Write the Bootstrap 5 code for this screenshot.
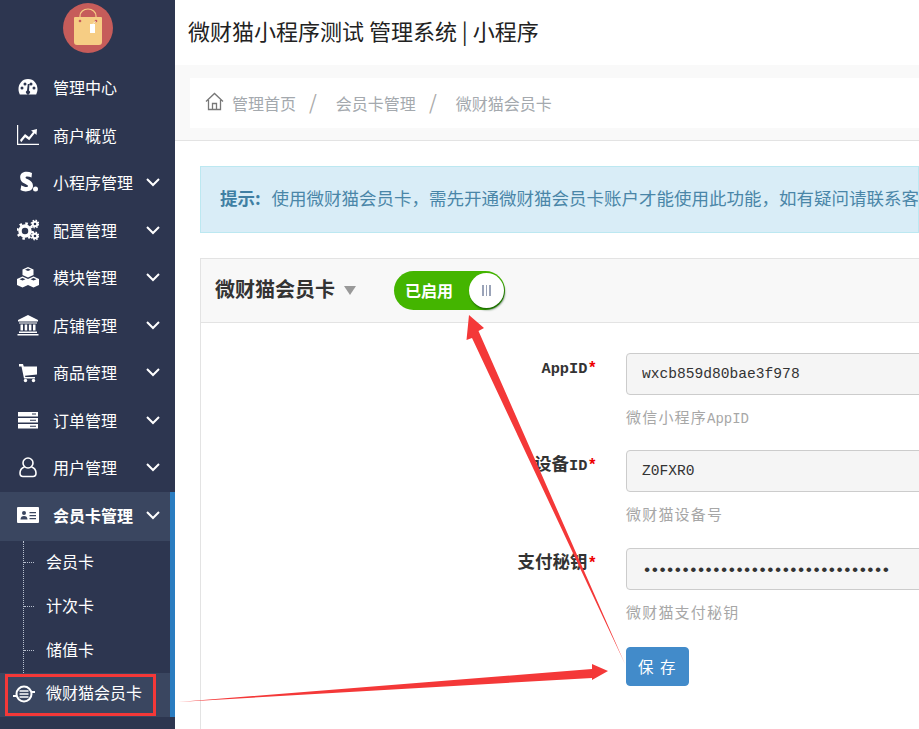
<!DOCTYPE html>
<html lang="zh">
<head>
<meta charset="utf-8">
<title>微财猫会员卡</title>
<link rel="stylesheet" href="https://cdn.jsdelivr.net/npm/bootstrap@5.3.0/dist/css/bootstrap.min.css">
<style>
html,body{height:729px;overflow:hidden;}
body{font-family:"Noto Sans CJK SC","Liberation Sans",sans-serif;background:#fff;position:relative;width:919px;}
.shell{height:729px;width:919px;overflow:hidden;}
.side{width:175px;background:#2d3650;flex:none;height:729px;color:#fff;}
.logo-box{height:64.5px;padding-top:3px;}
.menu-row{height:47.5px;padding-left:17px;padding-right:14px;padding-bottom:2px;font-size:16px;color:#fff;line-height:1;}
.menu-row .ico{width:22px;height:22px;flex:none;margin-right:14px;fill:#fff;}
.menu-row .lbl{flex:1;white-space:nowrap;}
.menu-row .chev{width:14px;height:10px;flex:none;margin-top:0;fill:none;stroke:#fff;stroke-width:2;margin-right:1px;}
.open-wrap{border-right:5px solid #2a7cc0;margin-top:-.5px;}
.menu-open{background:#3a4660;height:49px;padding-right:9px;}
.menu-open .lbl{font-weight:700;}
.sub-list{position:relative;}
.sub-list::before{content:"";position:absolute;left:23px;top:0;bottom:0;border-left:1px dotted #b8c0cf;}
.sub-row{height:44px;padding-left:46px;padding-bottom:4px;font-size:16px;position:relative;color:#fff;line-height:1;}
.sub-row.tick::before{content:"";position:absolute;left:24px;width:10px;top:21px;border-top:1px dotted #b8c0cf;}
.sub-row.now{background:#3a4660;padding-bottom:6px;}
.sub-ico{position:absolute;left:13px;top:10px;width:22px;height:22px;}
.main-area{flex:none;width:744px;min-width:0;overflow:hidden;}
.top-title{height:65px;padding-left:13px;padding-bottom:4px;font-size:22px;color:#222;white-space:nowrap;}
.crumb-band{height:76px;background:#f9f9f9;border-bottom:1px solid #e3e3e3;padding:13px 0 0 15px;}
.crumb-box{height:50px;background:#fff;padding-left:15px;font-size:16px;}
.crumb-box .breadcrumb{--bs-breadcrumb-divider-color:#aaa;--bs-breadcrumb-item-padding-x:12px;--bs-breadcrumb-item-active-color:#a4a9ae;margin:0;}
.crumb-box .breadcrumb-item{color:#a4a9ae;padding-left:0;}
.crumb-box .breadcrumb-item+.breadcrumb-item{padding-left:13px;}
.crumb-box .breadcrumb-item+.breadcrumb-item::before{padding-right:19px;font-size:20px;line-height:22px;color:#aaa;}
.home-ico{width:19px;height:19px;margin-right:8px;margin-top:-3px;stroke:#777;fill:none;stroke-width:1.3;}
.page-body{padding:25px 0 0 25px;}
.tip-box{height:67px;background:#d9edf7;border:1px solid #bce8f1;color:#4a86a8;font-size:17.5px;border-radius:0;padding:0 0 3px 19px;margin:0 0 25px;white-space:nowrap;overflow:hidden;}
.tip-box b{color:#3f7fa3;margin-right:7px;}
.panel-box{border:1px solid #e3e3e3;border-radius:0;height:520px;width:800px;}
.panel-head{height:64px;background:#f8f8f8;border-bottom:1px solid #e3e3e3;border-radius:0!important;padding:0 0 3px 14px;}
.panel-name{font-size:20px;font-weight:700;color:#333;width:121px;white-space:nowrap;}
.tri{width:0;height:0;border-left:6.5px solid transparent;border-right:6.5px solid transparent;border-top:9px solid #999;margin:3px 0 0 8px;}
.toggle-pill{width:111px;height:39px;border-radius:20px;background:#44b500;margin-left:38px;margin-top:2px;padding:0 1px 0 11px;color:#fff;font-size:16px;font-weight:700;}
.toggle-knob{width:35px;height:35px;border-radius:50%;background:#fff;box-shadow:1px 2px 2px rgba(0,60,0,.6);gap:2px;}
.toggle-knob i{display:block;width:1.5px;height:11px;background:#9aa3b8;}
.form-rows{padding-top:30px;}
.field-row{margin:0;}
.field-label{width:396px;flex:none;padding:0;text-align:right;font-family:"Noto Sans CJK SC",sans-serif;font-weight:700;font-size:17.5px;color:#333;line-height:26px;}
.field-label span{font-family:"Liberation Mono",monospace;font-size:15.3px;}
.field-label em{color:#e00;font-style:normal;font-size:16px;font-family:"Liberation Mono",monospace;}
.field-main{width:375px;flex:none;margin-left:29px;}
.field-main .form-control{height:42px;background:#f5f5f5;border:1.5px solid #ccc;border-radius:4px;padding:0 15px;font-family:"Liberation Mono","Noto Sans CJK SC",monospace;font-size:14.6px;color:#333;box-shadow:none;}
.field-main .form-control.secret{font-size:17px;letter-spacing:-2.5px;padding-top:2px;}
.help-line{font-size:15px;color:#a7a7a7;margin:12px 0 0;height:43px;line-height:20px;letter-spacing:1.2px;}
.help-line span{font-family:"Liberation Mono",monospace;font-size:14px;letter-spacing:0;}
.help-tall{height:44px;}
.save-btn{width:63px;height:39px;background:#428bca;border:1px solid #428bca;border-radius:4px;color:#fff;font-size:15.5px;padding:0;margin-top:2px;letter-spacing:1.5px;}
.overlay{position:absolute;left:0;top:0;width:919px;height:729px;pointer-events:none;}
</style>
</head>
<body>
<div class="shell d-flex">
  <nav class="side d-flex flex-column">
    <div class="logo-box d-flex justify-content-center">
      <svg width="50" height="50" viewBox="0 0 50 50">
        <circle cx="25" cy="25" r="25" fill="#c65c5a"/>
        <path d="M12 14h26a1 1 0 0 1 1 1v24a3 3 0 0 1-3 3H14a3 3 0 0 1-3-3V15a1 1 0 0 1 1-1z" fill="#f6cd84"/>
        <path d="M17 17v-4a8 7 0 0 1 16 0v4" fill="none" stroke="#f6cd84" stroke-width="1.2"/>
        <circle cx="17" cy="18" r="1.300" fill="#c65c5a"/><circle cx="33" cy="18" r="1.300" fill="#c65c5a"/>
        <path d="M33 18l-3.500 3" stroke="#fff" stroke-width=".6"/>
        <path d="M27 21h5v9h-5z" fill="#fff"/>
      </svg>
    </div>
    <a class="menu-row d-flex align-items-center text-decoration-none">
      <svg class="ico" viewBox="0 0 22 22"><path fill-rule="evenodd" d="M11 3C5 3 1.500 8 1.500 13c0 2 .5 3.500 1.300 5.500h16.400c.8-2 1.300-3.500 1.300-5.500C20.500 8 17 3 11 3zM5 10.500a1.500 1.500 0 1 1 0 3 1.500 1.500 0 0 1 0-3zm3-4a1.500 1.500 0 1 1 0 3 1.500 1.500 0 0 1 0-3zm6 0a1.500 1.500 0 1 1 0 3 1.500 1.500 0 0 1 0-3zm3 4a1.500 1.500 0 1 1 0 3 1.500 1.500 0 0 1 0-3zM12.500 8l-.5 6.500a2 2 0 1 1-2 0L10.800 8z"/></svg>
      <span class="lbl">管理中心</span>
    </a>
    <a class="menu-row d-flex align-items-center text-decoration-none">
      <svg class="ico" viewBox="0 0 22 22"><path d="M0 1h1.200v18.800H22V21H0z"/><path d="M3 16l5-6 4 3 4-5-2-1.500 6-1.500-.5 6-1.800-1.800-5.500 7-4-3-4 5z"/></svg>
      <span class="lbl">商户概览</span>
    </a>
    <a class="menu-row d-flex align-items-center text-decoration-none">
      <svg class="ico" viewBox="0 0 22 22"><path d="M15 2l-.5 4.500C11.500 5 8.500 5 8.500 6.500c0 2 7.500 2 7.500 8.500 0 6-9 6.500-12.500 4l.8-4.800c3 2 6.700 2.300 6.700.8 0-2-7.800-2.300-7.800-8.500C2.700.500 10-.5 15 2z"/><circle cx="18.500" cy="18" r="2.500"/></svg>
      <span class="lbl">小程序管理</span>
      <svg class="chev" viewBox="0 0 14 10"><path d="M1 2l6 6 6-6"/></svg>
    </a>
    <a class="menu-row d-flex align-items-center text-decoration-none">
      <svg class="ico" viewBox="0 0 22 22"><circle cx="8" cy="12" r="5" fill="none" stroke="#fff" stroke-width="3.500"/><circle cx="8" cy="12" r="7.500" fill="none" stroke="#fff" stroke-width="2.500" stroke-dasharray="2.500 3.400"/><circle cx="18" cy="5" r="2.300" fill="none" stroke="#fff" stroke-width="2"/><circle cx="18" cy="5" r="3.800" fill="none" stroke="#fff" stroke-width="1.300" stroke-dasharray="1.500 1.500"/><circle cx="18" cy="17" r="2.300" fill="none" stroke="#fff" stroke-width="2"/><circle cx="18" cy="17" r="3.800" fill="none" stroke="#fff" stroke-width="1.300" stroke-dasharray="1.500 1.500"/></svg>
      <span class="lbl">配置管理</span>
      <svg class="chev" viewBox="0 0 14 10"><path d="M1 2l6 6 6-6"/></svg>
    </a>
    <a class="menu-row d-flex align-items-center text-decoration-none">
      <svg class="ico" viewBox="0 0 22 22"><path d="M11 1l5.500 2.500v5.500L11 11.500 5.500 9V3.500z"/><path d="M5.500 10.500L11 13v6l-5.500 2.500L0 19v-6z"/><path d="M16.500 10.500L22 13v6l-5.500 2.500L11 19v-6z"/><path d="M11 5l-3-1.300L11 2.400l3 1.300zM5.500 14.500l-3-1.300 3-1.300 3 1.300zM16.500 14.500l-3-1.300 3-1.300 3 1.300z" fill="#2d3650"/></svg>
      <span class="lbl">模块管理</span>
      <svg class="chev" viewBox="0 0 14 10"><path d="M1 2l6 6 6-6"/></svg>
    </a>
    <a class="menu-row d-flex align-items-center text-decoration-none">
      <svg class="ico" viewBox="0 0 22 22"><path d="M11 1l10 5v1.500H1V6z"/><path d="M2 8.500h18v1H2zM3.500 10.500h2.500v6H3.500zM7.700 10.500h2.500v6H7.700zM11.900 10.500h2.500v6h-2.500zM16 10.500h2.500v6H16zM2 17.500h18v1.500H2zM.5 20h21v1.500H.5z"/></svg>
      <span class="lbl">店铺管理</span>
      <svg class="chev" viewBox="0 0 14 10"><path d="M1 2l6 6 6-6"/></svg>
    </a>
    <a class="menu-row d-flex align-items-center text-decoration-none">
      <svg class="ico" viewBox="0 0 22 22"><path d="M2 3h4l.8 2.500H20v8l-12 1.300.3 1.200H18v1.500H7l-2.500-12H2z"/><circle cx="8.500" cy="19.500" r="1.700"/><circle cx="16.500" cy="19.500" r="1.700"/></svg>
      <span class="lbl">商品管理</span>
      <svg class="chev" viewBox="0 0 14 10"><path d="M1 2l6 6 6-6"/></svg>
    </a>
    <a class="menu-row d-flex align-items-center text-decoration-none">
      <svg class="ico" viewBox="0 0 22 22"><path fill-rule="evenodd" d="M1 3h20v4.500H1zM15 4.500v1h4v-1zM1 9h20v4.500H1zM13 10.700v1h6v-1zM1 15h20v4.500H1zM13 16.700v1h6v-1z"/></svg>
      <span class="lbl">订单管理</span>
      <svg class="chev" viewBox="0 0 14 10"><path d="M1 2l6 6 6-6"/></svg>
    </a>
    <a class="menu-row d-flex align-items-center text-decoration-none">
      <svg class="ico" viewBox="0 0 22 22"><circle cx="11" cy="7" r="5" fill="none" stroke="#fff" stroke-width="1.600"/><path d="M7.500 11c-2.800 1-4.500 3-4.500 6 0 2.500 1 3.500 3 3.500h10c2 0 3-1 3-3.500 0-3-1.700-5-4.500-6" fill="none" stroke="#fff" stroke-width="1.600"/></svg>
      <span class="lbl">用户管理</span>
      <svg class="chev" viewBox="0 0 14 10"><path d="M1 2l6 6 6-6"/></svg>
    </a>
    <div class="open-wrap">
      <a class="menu-row menu-open d-flex align-items-center text-decoration-none">
        <svg class="ico" viewBox="0 0 22 22"><path fill-rule="evenodd" d="M1 3h20a1 1 0 0 1 1 1v14a1 1 0 0 1-1 1H1a1 1 0 0 1-1-1V4a1 1 0 0 1 1-1zM7 7a2 2 0 1 0 0 4 2 2 0 0 0 0-4zM3.500 15.500h7c0-2.500-1.500-3.500-3.500-3.500s-3.500 1-3.500 3.500zM12.500 8v1.300H19V8zM12.500 11v1.300H19V11zM12.500 14v1.300H19V14z"/></svg>
        <span class="lbl">会员卡管理</span>
        <svg class="chev" viewBox="0 0 14 10"><path d="M1 2l6 6 6-6"/></svg>
      </a>
      <div class="sub-list">
        <div class="sub-row tick d-flex align-items-center">会员卡</div>
        <div class="sub-row tick d-flex align-items-center">计次卡</div>
        <div class="sub-row tick d-flex align-items-center">储值卡</div>
        <div class="sub-row now d-flex align-items-center">
          <svg class="sub-ico" viewBox="0 0 22 22"><circle cx="11" cy="11" r="7.500" fill="none" stroke="#fff" stroke-width="2"/><path d="M0 13h4M18 9h4" stroke="#fff" stroke-width="1.800"/><path d="M6.500 8h9M6.500 11h9M6.500 14h9" stroke="#fff" stroke-width="1.400"/></svg>
          微财猫会员卡
        </div>
      </div>
    </div>
  </nav>
  <div class="main-area">
    <header class="top-title d-flex align-items-center">微财猫小程序测试 管理系统 | 小程序</header>
    <div class="crumb-band">
      <div class="crumb-box d-flex align-items-center">
        <svg class="home-ico" viewBox="0 0 19 19"><path d="M1 9.500L9.500 1.500 18 9.500M3.500 8v9.500h12V8M7.500 17.500v-6h4v6"/></svg>
        <ol class="breadcrumb">
          <li class="breadcrumb-item">管理首页</li>
          <li class="breadcrumb-item">会员卡管理</li>
          <li class="breadcrumb-item active">微财猫会员卡</li>
        </ol>
      </div>
    </div>
    <div class="page-body">
      <div class="alert tip-box d-flex align-items-center"><b>提示:</b>&nbsp;使用微财猫会员卡，需先开通微财猫会员卡账户才能使用此功能，如有疑问请联系客</div>
      <div class="card panel-box">
        <div class="card-header panel-head d-flex align-items-center">
          <span class="panel-name">微财猫会员卡</span>
          <span class="tri"></span>
          <div class="toggle-pill d-flex align-items-center justify-content-between">
            <span>已启用</span>
            <span class="toggle-knob d-flex align-items-center justify-content-center"><i></i><i></i><i></i></span>
          </div>
        </div>
        <form class="form-rows">
          <div class="field-row d-flex">
            <label class="field-label"><span>AppID</span><em>*</em></label>
            <div class="field-main">
              <input class="form-control" type="text" value="wxcb859d80bae3f978">
              <p class="help-line">微信小程序<span>AppID</span></p>
            </div>
          </div>
          <div class="field-row d-flex">
            <label class="field-label">设备<span>ID</span><em>*</em></label>
            <div class="field-main">
              <input class="form-control" type="text" value="Z0FXR0">
              <p class="help-line help-tall">微财猫设备号</p>
            </div>
          </div>
          <div class="field-row d-flex">
            <label class="field-label">支付秘钥<em>*</em></label>
            <div class="field-main">
              <input class="form-control secret" type="password" value="12345678901234567890123456789012">
              <p class="help-line">微财猫支付秘钥</p>
            </div>
          </div>
          <div class="field-row d-flex">
            <span class="field-label"></span>
            <div class="field-main"><button type="button" class="btn save-btn">保 存</button></div>
          </div>
        </form>
      </div>
    </div>
  </div>
</div>
<svg class="overlay" viewBox="0 0 919 729">
  <rect x="6.500" y="675.500" width="148" height="39" fill="none" stroke="#f43838" stroke-width="3"/>
  <path d="M469 315L484 328 478.500 331 625 664 472 338 466.500 340z" fill="#f43838"/>
  <path d="M178 702L592 669 592 664 608 671 592 680 592 678z" fill="#f43838"/>
</svg>
<script src="https://cdn.jsdelivr.net/npm/bootstrap@5.3.0/dist/js/bootstrap.bundle.min.js"></script>
</body>
</html>
